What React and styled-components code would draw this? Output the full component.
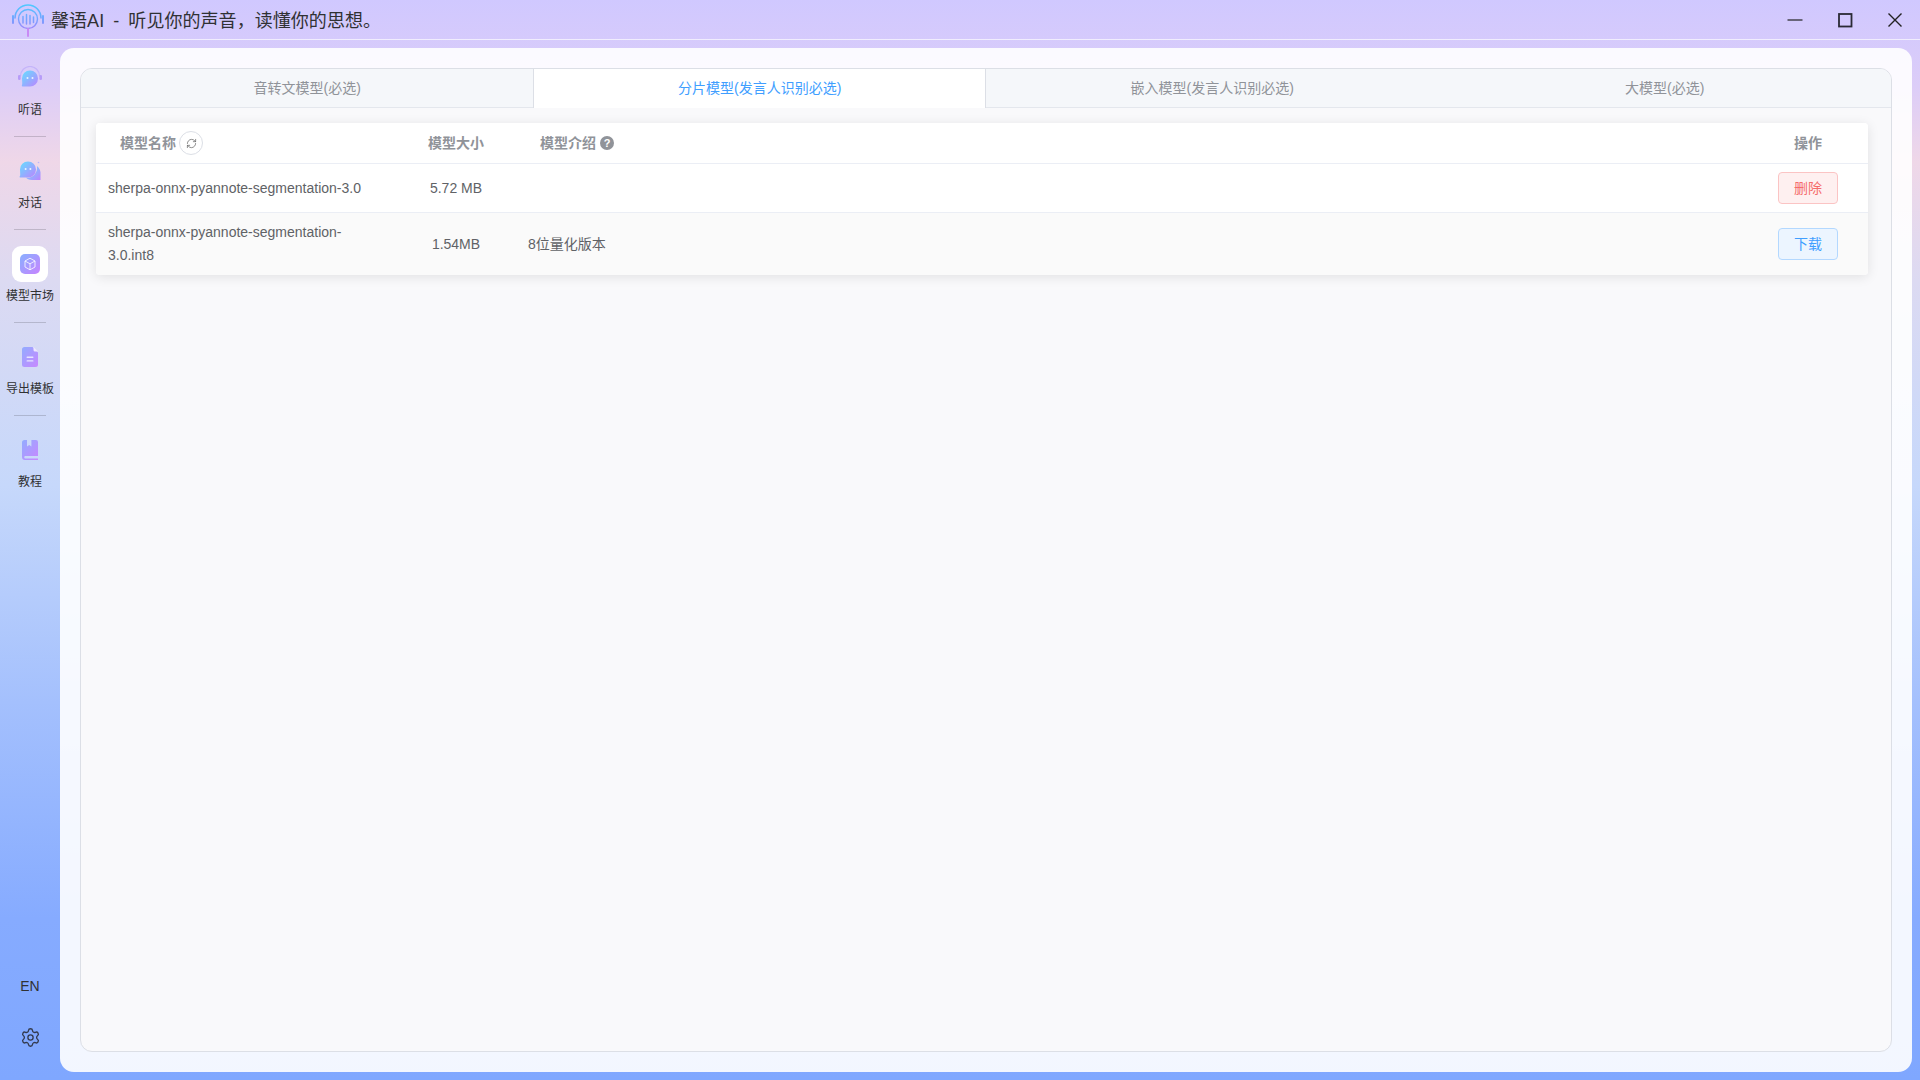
import React from 'react';
import styled, { createGlobalStyle } from 'styled-components';
import { RefreshCw, Settings } from 'lucide-react';

const Global = createGlobalStyle`
  html, body { margin: 0; padding: 0; height: 100%; }
  body { font-family: "Liberation Sans", "Noto Sans CJK SC", sans-serif; overflow: hidden; }
  #root { height: 100%; }
  * { box-sizing: border-box; }
`;

const Shell = styled.div`
  width: 1920px; height: 1080px; display: flex; flex-direction: column;
  background: linear-gradient(180deg, #d0c8ff 0%, #dccdf8 8%, #efd7e8 15%, #dcdaf2 26%, #c6d8fb 45%, #a4c0fd 65%, #86abff 85%, #7fa7ff 100%);
`;
const TitleBar = styled.header`
  height: 40px; flex: none; display: flex; align-items: center; padding-left: 10px;
  border-bottom: 1px solid rgba(255,255,255,.65);
`;
const Title = styled.h1`
  margin: 0 0 2px 5px; font-size: 18px; font-weight: 400; color: #303133; flex: 1; white-space: pre; word-spacing: 4px; letter-spacing: .05px;
`;
const WinButton = styled.button`
  width: 50px; height: 39px; padding: 0; border: 0; background: none;
  display: flex; align-items: center; justify-content: center; color: #222;
`;
const Body = styled.div`
  flex: 1; display: flex; min-height: 0;
`;
const Sidebar = styled.nav`
  width: 60px; flex: none; display: flex; flex-direction: column; align-items: center; padding-top: 20px;
`;
const NavItem = styled.div`
  display: flex; flex-direction: column; align-items: center; width: 60px;
`;
const NavIcon = styled.div`
  width: 36px; height: 36px; border-radius: 9px; display: flex; align-items: center; justify-content: center;
  background: ${p => (p.$active ? '#fff' : 'transparent')};
`;
const NavLabel = styled.span`
  font-size: 12px; line-height: 16px; margin-top: 6px; color: #303133; white-space: nowrap;
`;
const NavDivider = styled.div`
  width: 32px; height: 1px; background: rgba(60,60,70,.22); margin: 18px 0 16px;
`;
const SideFoot = styled.div`
  margin-top: auto; display: flex; flex-direction: column; align-items: center; padding-bottom: 32px;
`;
const Lang = styled.span`
  font-size: 14px; line-height: 16px; color: #303133; margin-bottom: 33px;
`;
const Panel = styled.main`
  flex: 1; margin: 8px 8px 8px 0; padding: 20px 20px 20px; border-radius: 14px;
  background: rgba(255,255,255,.9); display: flex; min-width: 0;
`;
const Tabs = styled.section`
  flex: 1; display: flex; flex-direction: column; border: 1px solid #dcdfe6; border-radius: 12px; overflow: hidden;
  background: #f9f9fb;
`;
const TabBar = styled.div`
  height: 39px; flex: none; display: grid; grid-template-columns: repeat(4, 1fr); background: #f5f7fa;
  border-bottom: 1px solid #e4e7ed;
`;
const Tab = styled.div`
  height: ${p => (p.$active ? '39px' : '38px')};
  padding-bottom: ${p => (p.$active ? '3px' : '2px')};
  display: flex; align-items: center; justify-content: center; font-size: 14px;
  color: ${p => (p.$active ? '#409eff' : '#909399')};
  background: ${p => (p.$active ? '#fff' : 'transparent')};
  box-shadow: ${p => (p.$active ? '-1px 0 0 #dcdfe6, inset -1px 0 0 #dcdfe6' : 'none')};
`;
const TabBody = styled.div`
  padding: 15px 23px 0 15px;
`;
const Table = styled.div`
  background: #fff; border-radius: 4px; box-shadow: 0 2px 12px rgba(0,0,0,.1); overflow: hidden;
  font-size: 14px; color: #606266;
`;
const Row = styled.div`
  display: grid; grid-template-columns: 300px 120px 1fr 120px; align-items: center;
  background: ${p => (p.$stripe ? '#fafafa' : '#fff')};
  & + & { border-top: 1px solid #ebeef5; }
`;
const HeadCell = styled.div`
  height: 40px; padding-bottom: 2px; display: flex; align-items: center; font-weight: 700; color: #909399;
  justify-content: ${p => p.$align || 'center'};
  padding-left: ${p => p.$pad || 0}px;
`;
const Cell = styled.div`
  padding: 8px 12px; line-height: 23px;
  display: flex; justify-content: ${p => p.$align || 'flex-start'};
`;
const SortButton = styled.span`
  width: 24px; height: 24px; margin: 2px 0 0 3px; border: 1px solid #dcdfe6; border-radius: 50%; background: #fff;
  display: flex; align-items: center; justify-content: center; color: #666;
`;
const Help = styled.span`
  width: 14px; height: 14px; margin: 2px 0 0 4px; border-radius: 50%; background: #909399; color: #fff;
  font-size: 11px; line-height: 14px; text-align: center; font-weight: 700;
`;
const ActionButton = styled.button`
  width: 60px; height: 32px; padding: 0; border-radius: 4px; font: inherit; line-height: 30px; border: 1px solid;
  color: ${p => (p.$danger ? '#f56c6c' : '#409eff')};
  background: ${p => (p.$danger ? '#fef0f0' : '#ecf5ff')};
  border-color: ${p => (p.$danger ? '#fbc4c4' : '#b3d8ff')};
`;

const Grad = ({ id, from = '#62e0ff', to = '#bc84ff' }) => (
  <defs>
    <linearGradient id={id} x1="0" y1="0" x2="1" y2="1">
      <stop offset="0" stopColor={from} />
      <stop offset="1" stopColor={to} />
    </linearGradient>
  </defs>
);

const Logo = () => (
  <svg width="36" height="36" viewBox="0 0 36 36" fill="none" strokeLinecap="round">
    <defs>
      <linearGradient id="lg" gradientUnits="userSpaceOnUse" x1="0" y1="3" x2="0" y2="34">
        <stop offset="0" stopColor="#4fc8ff" />
        <stop offset=".55" stopColor="#7f9bff" />
        <stop offset="1" stopColor="#c070f5" />
      </linearGradient>
    </defs>
    <path d="M5 16 A13 13 0 0 1 31 16" stroke="url(#lg)" strokeWidth="1.6" />
    <circle cx="18" cy="17" r="9.5" stroke="url(#lg)" strokeWidth="1.4" />
    <path d="M3 14 V21 M33 14 V21" stroke="url(#lg)" strokeWidth="2" />
    <path d="M13 14.5 V21 M16.5 12.5 V22 M20 13.5 V22 M23.5 15 V20.5" stroke="url(#lg)" strokeWidth="1.5" />
    <path d="M18 27 V34" stroke="#c98af5" strokeWidth="2" />
  </svg>
);

const IconListen = () => (
  <svg width="26" height="24" viewBox="0 0 26 24" fill="none">
    <Grad id="a1" />
    <path d="M3.5 10 A9.5 9.5 0 0 1 22.5 10" stroke="#c4b4fa" strokeWidth="1.2" />
    <rect x="1" y="9" width="2.6" height="5" rx="1.2" fill="#b79cf8" />
    <rect x="22.4" y="9" width="2.6" height="5" rx="1.2" fill="#b79cf8" />
    <path d="M13 4.5 A8 8 0 0 1 21 12.5 A8 8 0 0 1 13 20.5 H5.5 A1 1 0 0 1 5 19 C5.4 18 5.3 16.5 5 12.5 A8 8 0 0 1 13 4.5 Z" fill="url(#a1)" />
    <circle cx="10.5" cy="12" r="1" fill="#e9f3ff" />
    <circle cx="15.5" cy="12" r="1" fill="#e9f3ff" />
  </svg>
);
const IconChat = () => (
  <svg width="24" height="24" viewBox="0 0 24 24" fill="none">
    <Grad id="a2" />
    <path d="M19 7 C21.5 9 23 12 22.5 16 L22.5 21 L14 21 C11 21 9 20 8 18.5 C14 20 20 14 19 7 Z" fill="url(#a2)" />
    <path d="M10 2.5 A8 8 0 0 1 18 10.5 A8 8 0 0 1 10 18.5 H2.5 A.8 .8 0 0 1 2 17 C2.4 16 2.2 14.5 2 10.5 A8 8 0 0 1 10 2.5 Z" fill="url(#a2)" />
    <circle cx="7.6" cy="10" r="1" fill="#e9f3ff" />
    <circle cx="12.4" cy="10" r="1" fill="#e9f3ff" />
    <circle cx="20.5" cy="3.5" r=".8" fill="#b9b4fb" />
  </svg>
);
const IconMarket = () => (
  <svg width="20" height="20" viewBox="0 0 20 20" fill="none">
    <Grad id="a3" from="#88b0ff" to="#c884ff" />
    <rect width="20" height="20" rx="5" fill="url(#a3)" />
    <path d="M10 4.2 L15 7 V13 L10 15.8 L5 13 V7 Z M5 7 L10 9.8 L15 7 M10 9.8 V15.8" stroke="#fff" strokeOpacity=".8" strokeWidth="1" strokeLinejoin="round" />
  </svg>
);
const IconDoc = () => (
  <svg width="16" height="20" viewBox="0 0 16 20" fill="none">
    <Grad id="a4" from="#92acff" to="#c888ff" />
    <path d="M2.5 0 H10.5 L16 5.5 V17.5 A2.5 2.5 0 0 1 13.5 20 H2.5 A2.5 2.5 0 0 1 0 17.5 V2.5 A2.5 2.5 0 0 1 2.5 0 Z" fill="url(#a4)" />
    <path d="M11.5 0 L16 4.5 H13 A1.5 1.5 0 0 1 11.5 3 Z" fill="#efe7ff" />
    <rect x="4.5" y="9.5" width="7" height="1.4" rx=".7" fill="#e6e4ff" />
    <rect x="4.5" y="13.2" width="7" height="1.4" rx=".7" fill="#e6e4ff" />
  </svg>
);
const IconBook = () => (
  <svg width="16" height="20" viewBox="0 0 16 20" fill="none">
    <Grad id="a5" from="#92acff" to="#c888ff" />
    <path d="M2.5 0 H5 V6.5 L7.2 5 L9.4 6.5 V0 H14 A2 2 0 0 1 16 2 V16 H3 A1.4 1.4 0 0 0 3 18.5 H16 V20 H3 A3 3 0 0 1 0 17 V2.5 A2.5 2.5 0 0 1 2.5 0 Z" fill="url(#a5)" />
  </svg>
);

const nav = [
  { label: '听语', icon: <IconListen /> },
  { label: '对话', icon: <IconChat /> },
  { label: '模型市场', icon: <IconMarket />, active: true },
  { label: '导出模板', icon: <IconDoc /> },
  { label: '教程', icon: <IconBook /> },
];
const tabs = ['音转文模型(必选)', '分片模型(发言人识别必选)', '嵌入模型(发言人识别必选)', '大模型(必选)'];

export default function App() {
  return (
    <Shell>
      <Global />
      <TitleBar>
        <Logo />
        <Title>馨语AI - 听见你的声音，读懂你的思想。</Title>
        <WinButton aria-label="minimize">
          <svg width="16" height="16" viewBox="0 0 16 16"><path d="M0.5 8 H15.5" stroke="#222" strokeWidth="1.2" /></svg>
        </WinButton>
        <WinButton aria-label="maximize">
          <svg width="16" height="16" viewBox="0 0 16 16"><rect x="2" y="2" width="12.5" height="12.5" fill="none" stroke="#2a2a35" strokeWidth="1.8" /></svg>
        </WinButton>
        <WinButton aria-label="close">
          <svg width="16" height="16" viewBox="0 0 16 16"><path d="M1.5 1.5 L14.5 14.5 M14.5 1.5 L1.5 14.5" stroke="#222" strokeWidth="1.4" /></svg>
        </WinButton>
      </TitleBar>
      <Body>
        <Sidebar>
          {nav.map((n, i) => (
            <React.Fragment key={n.label}>
              <NavItem>
                <NavIcon $active={n.active}>{n.icon}</NavIcon>
                <NavLabel>{n.label}</NavLabel>
              </NavItem>
              {i < nav.length - 1 && <NavDivider />}
            </React.Fragment>
          ))}
          <SideFoot>
            <Lang>EN</Lang>
            <Settings size={21} color="#333a4d" strokeWidth={1.5} />
          </SideFoot>
        </Sidebar>
        <Panel>
          <Tabs>
            <TabBar>
              {tabs.map((t, i) => <Tab key={t} $active={i === 1}>{t}</Tab>)}
            </TabBar>
            <TabBody>
              <Table>
                <Row>
                  <HeadCell $align="flex-start" $pad={24}>模型名称<SortButton><RefreshCw size={11} strokeWidth={1.6} /></SortButton></HeadCell>
                  <HeadCell>模型大小</HeadCell>
                  <HeadCell $align="flex-start" $pad={24}>模型介绍<Help>?</Help></HeadCell>
                  <HeadCell>操作</HeadCell>
                </Row>
                <Row>
                  <Cell>sherpa-onnx-pyannote-segmentation-3.0</Cell>
                  <Cell $align="center">5.72 MB</Cell>
                  <Cell />
                  <Cell $align="center"><ActionButton $danger>删除</ActionButton></Cell>
                </Row>
                <Row $stripe>
                  <Cell>sherpa-onnx-pyannote-segmentation-3.0.int8</Cell>
                  <Cell $align="center">1.54MB</Cell>
                  <Cell>8位量化版本</Cell>
                  <Cell $align="center"><ActionButton>下载</ActionButton></Cell>
                </Row>
              </Table>
            </TabBody>
          </Tabs>
        </Panel>
      </Body>
    </Shell>
  );
}
